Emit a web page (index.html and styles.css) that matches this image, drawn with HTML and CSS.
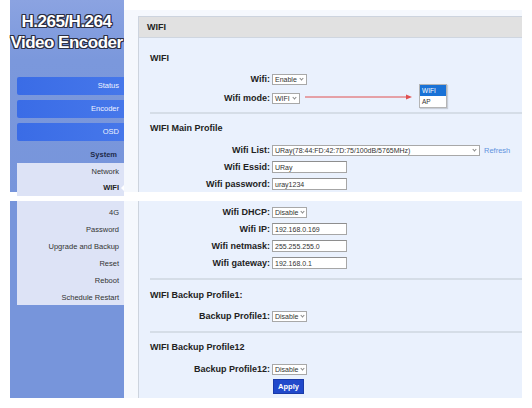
FILE: index.html
```html
<!DOCTYPE html>
<html>
<head>
<meta charset="utf-8">
<link rel="stylesheet" href="styles.css">
</head>
<body>
<div class="shot shot-top">
  <aside class="side">
    <div class="logo">H.265/H.264<br>Video Encoder</div>
    <div class="btn">Status</div>
    <div class="btn">Encoder</div>
    <div class="btn">OSD</div>
    <div class="group">System</div>
    <div class="sub">
      <div class="item">Network</div>
      <div class="item active">WIFI</div>
    </div>
  </aside>
  <div class="stage">
    <div class="box">
      <div class="box-head">WIFI</div>
      <div class="body body-top">
        <div class="title t1">WIFI</div>
        <div class="row r-wifi"><span class="lbl">Wifi:</span><span class="sel w35">Enable<i class="chev"></i></span></div>
        <div class="row r-mode"><span class="lbl">Wifi mode:</span><span class="sel w28">WIFI<i class="chev"></i></span></div>
        <div class="sep s1"></div>
        <div class="title t2">WIFI Main Profile</div>
        <div class="row r-list"><span class="lbl">Wifi List:</span><span class="sel w208">URay(78:44:FD:42:7D:75/100dB/5765MHz)<i class="chev"></i></span><span class="refresh">Refresh</span></div>
        <div class="row r-next"><span class="lbl">Wifi Essid:</span><span class="inp">URay</span></div>
        <div class="row r-next"><span class="lbl">Wifi password:</span><span class="inp">uray1234</span></div>
        <svg class="arrow" width="108" height="6" viewBox="0 0 108 6"><line x1="0" y1="3" x2="102" y2="3" stroke="#e05050" stroke-width="1"/><path d="M101 0.5 L107 3 L101 5.5 Z" fill="#e05050"/></svg>
        <div class="popup"><div class="opt on">WIFI</div><div class="opt">AP</div></div>
      </div>
    </div>
  </div>
</div>

<div class="shot shot-bottom">
  <aside class="side">
    <div class="sub sub-b">
      <div class="item">4G</div>
      <div class="item">Password</div>
      <div class="item">Upgrade and Backup</div>
      <div class="item">Reset</div>
      <div class="item">Reboot</div>
      <div class="item">Schedule Restart</div>
    </div>
  </aside>
  <div class="stage">
    <div class="box box-b">
      <div class="body body-bottom">
        <div class="row r-dhcp"><span class="lbl">Wifi DHCP:</span><span class="sel w35">Disable<i class="chev"></i></span></div>
        <div class="row r-next"><span class="lbl">Wifi IP:</span><span class="inp">192.168.0.169</span></div>
        <div class="row r-next"><span class="lbl">Wifi netmask:</span><span class="inp">255.255.255.0</span></div>
        <div class="row r-next"><span class="lbl">Wifi gateway:</span><span class="inp">192.168.0.1</span></div>
        <div class="sep s2"></div>
        <div class="title t3">WIFI Backup Profile1:</div>
        <div class="row r-bk"><span class="lbl">Backup Profile1:</span><span class="sel w35">Disable<i class="chev"></i></span></div>
        <div class="sep s3"></div>
        <div class="title t4">WIFI Backup Profile12</div>
        <div class="row r-bk2"><span class="lbl">Backup Profile12:</span><span class="sel w35">Disable<i class="chev"></i></span></div>
        <div class="row r-apply"><span class="lbl"></span><span class="apply">Apply</span></div>
      </div>
    </div>
  </div>
</div>
</body>
</html>
```
FILE: styles.css
```css
* { box-sizing: border-box; }
html, body { margin: 0; padding: 0; background: #fff; }
body { width: 532px; height: 408px; overflow: hidden; font-family: "Liberation Sans", Arial, sans-serif; color: #222; }

.shot { display: flex; padding-left: 10px; width: 522px; }
.shot-top { height: 192px; }
.shot-bottom { height: 197px; margin-top: 9px; }

.side { width: 114px; flex: none; background: #7795db; display: flex; flex-direction: column; }
.shot-top .side { background: linear-gradient(#8ba3e1 0px, #7b98dc 60px, #7795db 100%); padding-top: 11px; }

.logo { color: #fff; font-weight: bold; font-size: 17px; line-height: 21px; letter-spacing: -0.5px; text-align: center; padding-right: 1px;
  text-shadow: -1px -1px 0 #2b2f45, 1px -1px 0 #2b2f45, -1px 1px 0 #2b2f45, 1px 1px 0 #2b2f45, 0 1px 0 #2b2f45, 0 -1px 0 #2b2f45, 1px 0 0 #2b2f45, -1px 0 0 #2b2f45; }

.btn { margin-left: 7px; height: 18px; margin-bottom: 5px; background: linear-gradient(90deg, #3a6ce6, #4677ea); border-radius: 2px 0 0 2px;
  color: #eef2ff; font-size: 7.5px; line-height: 18px; text-align: right; padding-right: 5px; }
.logo + .btn { margin-top: 24px; }

.group { margin-left: 7px; height: 17px; font-size: 7.5px; font-weight: bold; line-height: 17px; text-align: right; padding-right: 7px; color: #1e2a4a; }

.sub { margin-left: 7px; background: #dde3f6; padding-top: 1px; flex: 1; }
.sub-b { flex: none; height: 104px; padding-top: 3px; }
.item { position: relative; height: 16px; line-height: 16px; font-size: 7.5px; text-align: right; padding-right: 5px; color: #333; }
.sub-b .item { height: 17px; line-height: 17px; }
.item.active { font-weight: bold; color: #222; }
.item.active::after { content: ""; position: absolute; right: 0; top: 5px; border: 3px solid transparent; border-right: 3px solid #fff; }

.stage { flex: 1; background: #f5f8fd; padding-left: 14px; }
.shot-top .stage { margin-top: 10px; padding-top: 6px; }
.box { height: 100%; border-left: 1px solid #cdd4de; border-top: 1px solid #cdd4de; background: #eaf1fd; display: flex; flex-direction: column; }
.box-b { border-top: none; }
.box-head { height: 21px; background: #e1e1e1; border-bottom: 1px solid #cfd6e0; font-size: 9px; font-weight: bold; line-height: 20px; padding-left: 8px; color: #222; }
.body { position: relative; padding-left: 11px; flex: 1; }
.body-top { padding-top: 13px; }
.body-bottom { padding-top: 5px; }

.title { height: 14px; line-height: 14px; font-size: 9px; font-weight: bold; color: #222; }
.row { display: flex; align-items: center; height: 12px; }
.lbl { width: 120px; flex: none; text-align: right; font-size: 9px; font-weight: bold; color: #222; margin-right: 2px; white-space: nowrap; }

.r-wifi { margin-top: 8px; }
.r-mode { margin-top: 7px; }
.s1 { margin-top: 8px; }
.t2 { margin-top: 7px; }
.r-list { margin-top: 9px; }
.r-next { margin-top: 5px; }
.s2 { margin-top: 9px; }
.t3 { margin-top: 8px; }
.r-bk { margin-top: 8px; }
.s3 { margin-top: 9px; }
.t4 { margin-top: 7px; }
.r-bk2 { margin-top: 9px; }
.r-apply { margin-top: 4px; height: 15px; }

.sep { height: 2px; background: #d5dde7; }

.sel { display: inline-flex; align-items: center; justify-content: space-between; height: 11px; border: 1px solid #a8a8a8; background: #fff; font-size: 7px; color: #333; padding: 0 2px 0 2px; white-space: nowrap; overflow: hidden; }
.w35 { width: 35px; }
.w28 { width: 28px; }
.w208 { width: 208px; }
.chev { display: inline-block; width: 3px; height: 3px; border-right: 1px solid #888; border-bottom: 1px solid #888; transform: rotate(45deg); margin: -2px 1px 0 3px; flex: none; }

.inp { display: inline-flex; align-items: center; width: 75px; height: 12px; border: 1px solid #a6a6a6; border-top-color: #8e8e8e; background: #fff; font-size: 7px; color: #333; padding-left: 2px; }

.refresh { font-size: 7.5px; color: #5f93de; margin-left: 4px; }

.apply { display: inline-flex; align-items: center; justify-content: center; width: 31px; height: 15px; background: #2149cb; border: 1px solid #1a3aa8; color: #fff; font-size: 7.5px; font-weight: bold; margin-left: 1px; }

.arrow { position: absolute; left: 166px; top: 56px; }
.popup { position: absolute; left: 280px; top: 46px; width: 28px; border: 1px solid #b5b5b5; background: #fff; box-shadow: 1px 1px 1px rgba(0,0,0,0.15); }
.opt { height: 11px; line-height: 11px; font-size: 6.5px; padding-left: 2px; color: #333; }
.opt.on { background: #1a72d6; color: #fff; }
```
